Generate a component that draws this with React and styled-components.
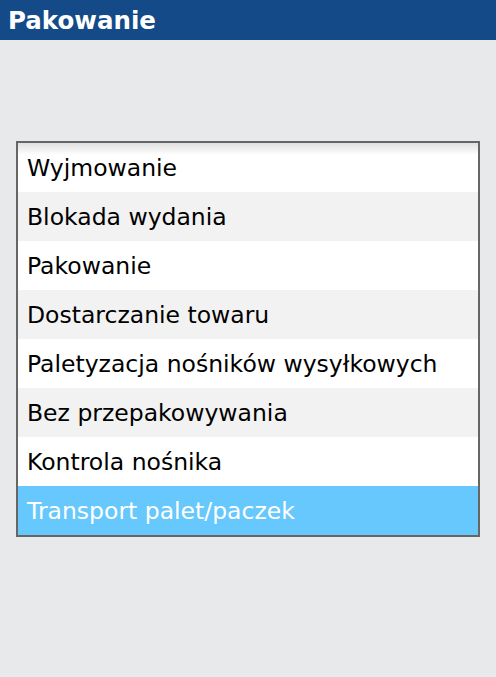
import React from 'react';
import styled, { createGlobalStyle } from 'styled-components';

const GlobalStyle = createGlobalStyle`
  html, body {
    margin: 0;
    padding: 0;
    background: #e8e9eb;
    font-family: "DejaVu Sans", Verdana, sans-serif;
  }
`;

const items = [
  'Wyjmowanie',
  'Blokada wydania',
  'Pakowanie',
  'Dostarczanie towaru',
  'Paletyzacja nośników wysyłkowych',
  'Bez przepakowywania',
  'Kontrola nośnika',
  'Transport palet/paczek',
];

function App() {
  const selected = 7;

  return (
    <Page>
      <GlobalStyle />
      <Header>Pakowanie</Header>
      <Content>
        <List>
          {items.map((label, i) => (
            <Row key={label} $odd={i % 2 === 1} $selected={i === selected}>
              {label}
            </Row>
          ))}
        </List>
      </Content>
    </Page>
  );
}

export default App;

const Page = styled.div`
  width: 496px;
  height: 677px;
  background: #e8e9eb;
  display: flex;
  flex-direction: column;
`;

const Header = styled.div`
  height: 40px;
  background: #134a87;
  color: #fff;
  font-weight: bold;
  font-size: 24.5px;
  line-height: 42px;
  padding-left: 8px;
`;

const Content = styled.div`
  padding: 101px 16px 0 16px;
`;

const List = styled.div`
  position: relative;
  border: 2px solid #666;
  background: #fff;
  display: flex;
  flex-direction: column;

  &::before {
    content: '';
    position: absolute;
    left: 0;
    right: 0;
    top: 0;
    height: 12px;
    background: linear-gradient(rgba(0, 0, 0, 0.12), rgba(0, 0, 0, 0));
    pointer-events: none;
  }
`;

const Row = styled.div`
  height: 49px;
  line-height: 51px;
  padding-left: 9px;
  font-size: 23.5px;
  white-space: nowrap;
  color: ${(p) => (p.$selected ? '#fff' : '#000')};
  background: ${(p) => (p.$selected ? '#66c8fc' : p.$odd ? '#f2f2f2' : '#fff')};
`;
